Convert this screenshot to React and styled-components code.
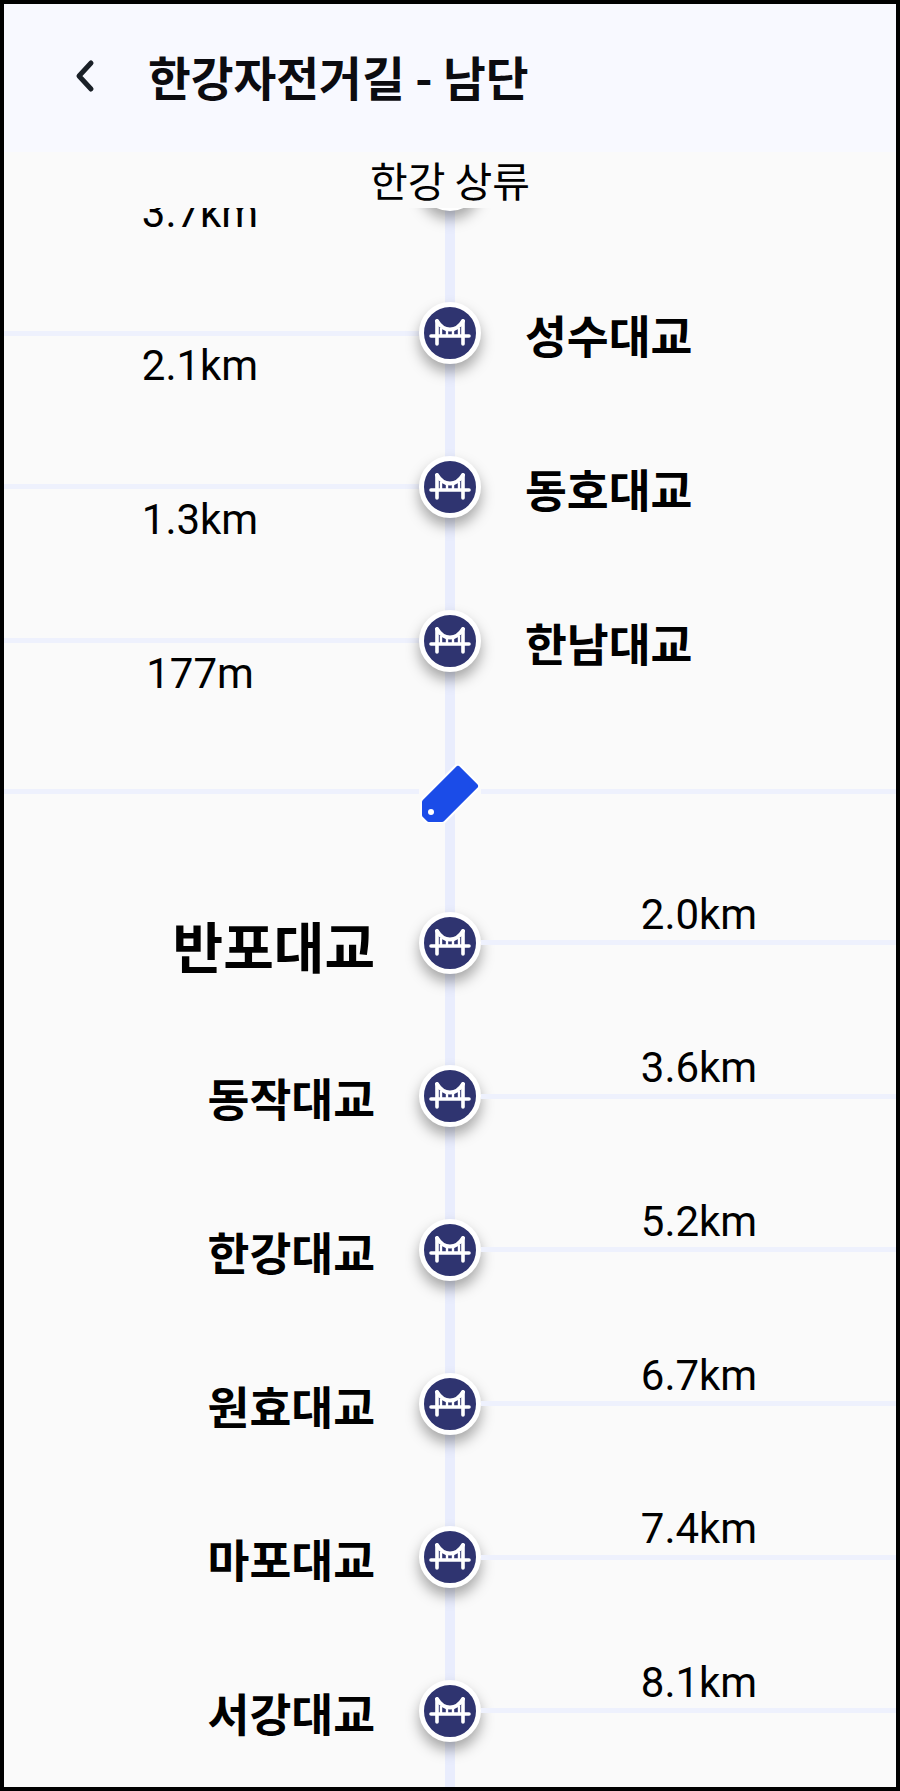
import React from "react";
import styled, { createGlobalStyle } from "styled-components";

const Global = createGlobalStyle`
  html, body { margin: 0; padding: 0; background: #000; }
  * { box-sizing: border-box; }
`;

const FONT = `Roboto, "Noto Sans CJK KR", sans-serif`;
const KR = `"Noto Sans CJK KR", Roboto, sans-serif`;
const RAIL = "#eef1fd";

const Frame = styled.div`
  width: 900px;
  height: 1791px;
  border: 4px solid #000;
  display: flex;
  flex-direction: column;
  background: #fafafa;
  overflow: hidden;
  font-family: ${FONT};
  color: #000;
`;

const Header = styled.header`
  height: 148px;
  flex: none;
  background: #f8f9ff;
  display: flex;
  align-items: center;
  padding: 0 0 0 68px;
  gap: 49px;
`;

const BackIcon = styled.svg`
  width: 27px;
  height: 36px;
  flex: none;
  margin-top: -4px;
`;

const Title = styled.h1`
  margin: -4px 0 0;
  font-family: ${KR};
  font-size: 46.5px;
  font-weight: 700;
  line-height: 56px;
  color: #0c0c10;
  white-space: nowrap;
`;

const Upstream = styled.div`
  height: 56px;
  flex: none;
  font-family: ${KR};
  font-size: 41px;
  line-height: 54px;
  text-align: center;
`;

const Viewport = styled.main`
  flex: 1;
  min-height: 0;
  overflow: hidden;
`;

const Track = styled.div`
  margin-top: -105px;
  background: linear-gradient(#e9edfd, #e9edfd) center / 10px 100% no-repeat;
`;

const Row = styled.section`
  display: grid;
  grid-template-columns: 1fr 62px 1fr;
  height: ${(p) => p.$height}px;
  align-items: stretch;
`;

const Cell = styled.div`
  display: grid;
  background: ${(p) =>
    p.$rail
      ? `linear-gradient(${RAIL}, ${RAIL}) center / 100% 5px no-repeat`
      : "none"};
`;

const Node = styled.div`
  align-self: center;
  justify-self: center;
  width: 62px;
  height: 62px;
  border-radius: 50%;
  border: 5px solid #fff;
  background: #2f3470;
  box-shadow: 0 8px 14px rgba(0, 0, 0, 0.34);
  display: flex;
  align-items: center;
  justify-content: center;
`;

const BridgeSvg = styled.svg`
  width: 52px;
  height: 52px;
  flex: none;
  display: block;
`;

const TagSlot = styled.div`
  align-self: center;
  justify-self: center;
  width: 62px;
  height: 62px;
  display: flex;
  align-items: center;
  justify-content: center;
`;

const TagSvg = styled.svg`
  width: 62px;
  height: 62px;
  flex: none;
  display: block;
`;

const Name = styled.div`
  align-self: center;
  justify-self: ${(p) => (p.$side === "left" ? "end" : "start")};
  margin: ${(p) => (p.$side === "left" ? "2px 44px 0 0" : "2px 0 0 44px")};
  font-family: ${KR};
  font-weight: 700;
  font-size: ${(p) => (p.$big ? 55 : 45.5)}px;
  line-height: 60px;
  white-space: nowrap;
`;

const Distance = styled.div`
  align-self: center;
  justify-self: start;
  width: 130px;
  text-align: center;
  font-size: 42px;
  line-height: 48px;
  white-space: nowrap;
  margin-left: ${(p) => (p.$side === "left" ? 131 : 153)}px;
  margin-top: ${(p) => (p.$side === "left" ? "66px" : "0")};
  margin-bottom: ${(p) => (p.$side === "left" ? "0" : "56px")};
`;

const Bridge = () => (
  <BridgeSvg viewBox="0 0 52 52" aria-hidden="true">
    <g fill="none" stroke="#fff" strokeLinejoin="round">
      <path d="M7 29H45" strokeWidth="3.6" strokeLinecap="round" />
      <path d="M13 14V37M39 14V37" strokeWidth="3.6" strokeLinecap="round" />
      <path d="M13 14C16 19 21 22.5 26 22.5C31 22.5 36 19 39 14" strokeWidth="4" strokeLinecap="round" />
      <path d="M17 21V28M23 23V28M29 23V28M35 21V28" strokeWidth="2.4" />
    </g>
  </BridgeSvg>
);

const TAG_PATH = "M39 8L56 25L23 58H10L6 54V41Z";

const Tag = () => (
  <TagSvg viewBox="0 0 62 62" aria-hidden="true">
    <path d={TAG_PATH} fill="#1b4ce8" stroke="#fff" strokeWidth="10" strokeLinejoin="round" />
    <path d={TAG_PATH} fill="#1b4ce8" stroke="#1b4ce8" strokeWidth="6" strokeLinejoin="round" />
    <circle cx="12" cy="51" r="3" fill="#fff" />
  </TagSvg>
);

const upper = [
  ["영동대교", "3.7km"],
  ["성수대교", "2.1km"],
  ["동호대교", "1.3km"],
  ["한남대교", "177m"],
];

const lower = [
  ["반포대교", "2.0km", true],
  ["동작대교", "3.6km"],
  ["한강대교", "5.2km"],
  ["원효대교", "6.7km"],
  ["마포대교", "7.4km"],
  ["서강대교", "8.1km"],
];

export default function App() {
  return (
    <>
      <Global />
      <Frame>
        <Header>
          <BackIcon viewBox="0 0 27 36" aria-hidden="true">
            <path
              d="M19 5L7 18L19 31"
              fill="none"
              stroke="#1a2027"
              strokeWidth="5"
              strokeLinecap="round"
              strokeLinejoin="round"
            />
          </BackIcon>
          <Title>한강자전거길 - 남단</Title>
        </Header>
        <Upstream>한강 상류</Upstream>
        <Viewport>
          <Track>
            {upper.map(([name, dist]) => (
              <Row key={name} $height={153.6}>
                <Cell $rail>
                  <Distance $side="left">{dist}</Distance>
                </Cell>
                <Node>
                  <Bridge />
                </Node>
                <Cell>
                  <Name $side="right">{name}</Name>
                </Cell>
              </Row>
            ))}
            <Row $height={148.6}>
              <Cell $rail />
              <TagSlot>
                <Tag />
              </TagSlot>
              <Cell $rail />
            </Row>
            {lower.map(([name, dist, big]) => (
              <Row key={name} $height={153.6}>
                <Cell>
                  <Name $side="left" $big={big}>
                    {name}
                  </Name>
                </Cell>
                <Node>
                  <Bridge />
                </Node>
                <Cell $rail>
                  <Distance $side="right">{dist}</Distance>
                </Cell>
              </Row>
            ))}
          </Track>
        </Viewport>
      </Frame>
    </>
  );
}
